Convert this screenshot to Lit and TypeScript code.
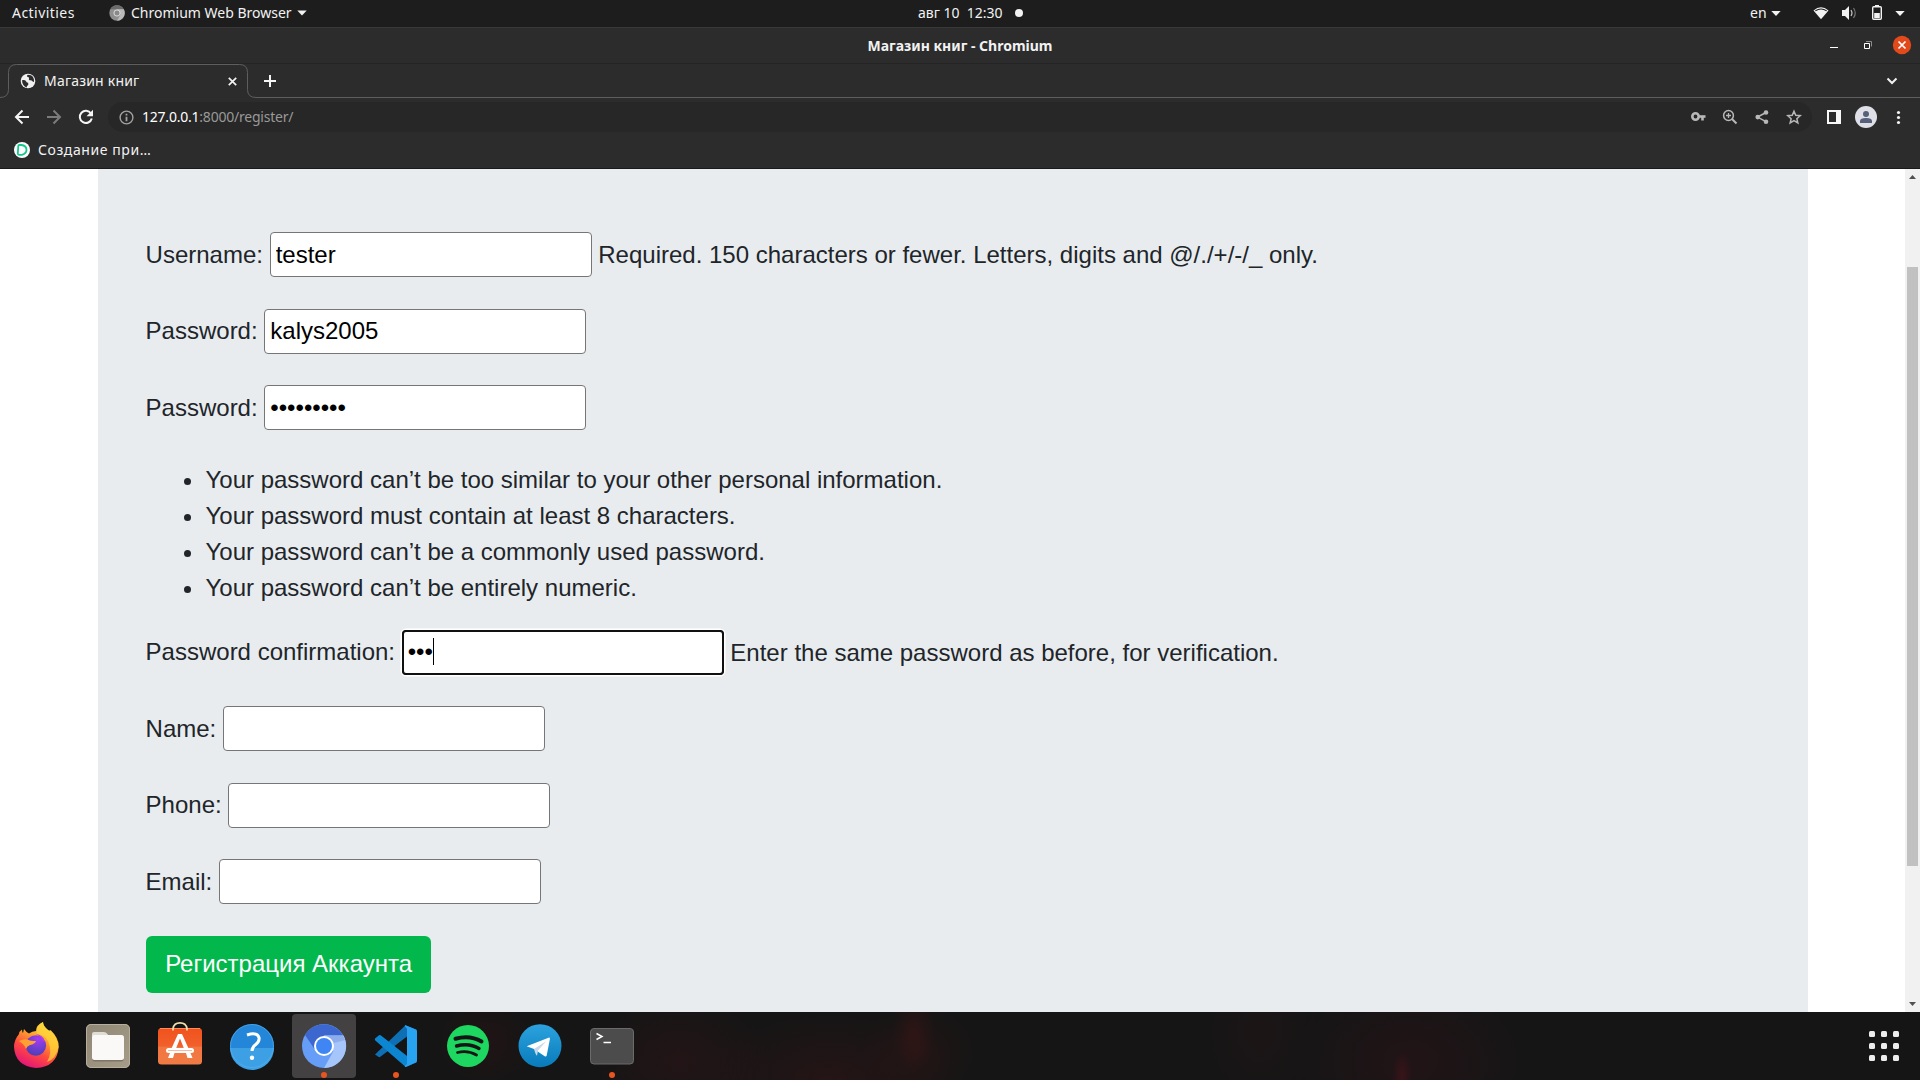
import { LitElement, html, css, svg } from "lit";
import { customElement, property } from "lit/decorators.js";

/* ---------- Top system panel, window title, tabs, toolbar ---------- */
@customElement("browser-chrome")
class BrowserChrome extends LitElement {
  static styles = css`
    :host { display: block; height: 169px; background: #2c2c2c; color: #f2f2f2;
      font-family: "Noto Sans", "DejaVu Sans", sans-serif; font-size: 14px; line-height: 20px; white-space: nowrap; }
    svg { display: block; flex: none; }
    .panel { height: 27px; background: #1d1d1d; border-bottom: 1px solid #393939; display: grid;
      grid-template-columns: 1fr auto 1fr; box-sizing: content-box; }
    .left, .right, .clock { display: flex; align-items: center; }
    .left { padding-left: 12px; }
    .act { width: 97px; letter-spacing: 0.45px; }
    .app { margin-left: 6px; width: 166px; }
    .clock { width: 84px; gap: 11px; }
    .clock .date { flex: none; width: 86px; white-space: pre; }
    .dot { flex: none; width: 8px; height: 8px; border-radius: 50%; background: #f2f2f2; }
    .clock, .left, .right { box-sizing: border-box; padding-bottom: 1px; }
    .right { justify-content: flex-end; }
    .right svg { margin-bottom: -1px; }
    .lang { width: 21px; }
    .title { height: 35px; border-bottom: 1px solid #242424; display: grid; grid-template-columns: 1fr auto 1fr; align-items: center; }
    .title b { grid-column: 2; font-weight: 700; font-size: 14px; }
    .title svg { justify-self: end; }
    .tabs { height: 34px; display: flex; }
    .tab { flex: none; width: 256px; height: 34px; display: grid; }
    .tab > * { grid-area: 1 / 1; }
    .tabin { display: flex; align-items: center; padding: 0 19.500px 0 20px; }
    .tabin .name { flex: 1; margin-left: 8px; letter-spacing: 0.2px; }
    .rest { flex: 1; border-bottom: 1px solid #5e5e5e; display: flex; align-items: center; justify-content: space-between; padding: 0 20px 0 8px; }
    .bar { height: 38px; display: flex; align-items: center; }
    .nav { width: 108px; }
    .pill { width: 1704px; height: 30px; border-radius: 15px; background: #272727; display: flex; align-items: center; }
    .pill .info { margin-left: 10.5px; }
    .url { flex: 1; margin-left: 8.5px; color: #999; letter-spacing: -0.22px; }
    .url b { font-weight: 400; color: #fff; }
    .marks { height: 28px; padding: 0 0 4px 14px; display: flex; align-items: center; gap: 8px; border-bottom: 1px solid #1a1a1a; }
    .marks span { letter-spacing: 0.58px; }
  `;
  render() {
    return html`
      <div class="panel">
        <div class="left">
          <span class="act">Activities</span>
          <svg width="16" height="16" viewBox="0 0 16 16"><circle cx="8" cy="8" r="7.7" fill="#8f8f8f"/><path d="M1.3 4.2A7.7 7.7 0 0 1 14.8 4.3H8z" fill="#6c6c6c"/><path d="M14.8 4.3A7.7 7.7 0 0 1 8 15.7L11.4 9.8 8 4.3z" fill="#b9b9b9"/><circle cx="8" cy="8" r="3.1" fill="#8a8a8a" stroke="#dcdcdc"/></svg>
          <span class="app">Chromium Web Browser</span>
          <svg width="10" height="6" viewBox="0 0 10 6"><path d="M.3.5h9.4L5 5.5z" fill="#f2f2f2"/></svg>
        </div>
        <div class="clock"><span class="date">авг 10  12:30</span><span class="dot"></span></div>
        <div class="right">
          <span class="lang">en</span>
          <svg width="149" height="27" viewBox="0 0 149 27" fill="#f2f2f2">
            <path d="M.3 11h9.4L5 16z"/>
            <path d="M42.500 10.500Q50 4 57.500 10.500L50 19.300z"/><path d="M44.300 10.900Q50 7 55.700 10.900" fill="none" stroke="#1d1d1d" stroke-width="1.100"/>
            <path d="M71 10h3l4-4v14l-4-4h-3z"/><path d="M80 10q2 3 0 6" fill="none" stroke="#c0c0c0" stroke-width="1.200"/><path d="M82.500 8q3.500 5 0 10" fill="none" stroke="#777" stroke-width="1.200"/>
            <path d="M104 5h4v2h-4z"/><rect x="101.700" y="6.700" width="8.600" height="12.600" rx="1" fill="none" stroke="#f2f2f2" stroke-width="1.400"/><path d="M103.200 13h5.600v5h-5.600z"/>
            <path d="M124.300 11h9.400L129 16z"/>
          </svg>
        </div>
      </div>
      <div class="title">
        <b>Магазин книг - Chromium</b>
        <svg width="100" height="35" viewBox="1820 28 100 35" fill="none">
          <path d="M1830 47.500h8" stroke="#fff"/>
          <path d="M1864.500 43.500h5v5h-5z" stroke="#fff"/><path d="M1866 41.500h5.500v5" stroke="#8c8c8c"/>
          <circle cx="1902" cy="45" r="9.200" fill="#e2491b"/><path d="M1898.500 41.500l7 7m0-7l-7 7" stroke="#fff" stroke-width="1.700"/>
        </svg>
      </div>
      <div class="tabs">
        <div class="tab">
          <svg width="256" height="34" viewBox="0 0 256 34" fill="none"><path d="M0 33.500Q8.500 33.500 8.500 25.500V8.500Q8.500.5 16.500.5H239.500Q247.500.5 247.500 8.500V25.500Q247.500 33.500 256 33.500" stroke="#5e5e5e"/></svg>
          <div class="tabin">
            <svg width="16" height="16" viewBox="0 0 16 16"><circle cx="8" cy="8" r="7.300" fill="#f1f1f1"/><path d="M2 7.200q3.200-.6 4.200 1.300.4 1.200 2 1.300v2.300q-1.700 1-1.500 2.300Q2.300 13 2 7.200zM7.800 1.700q-1.800 1.700 0 2.200 1.800.3 1.200 1.700-.6 1 .6 1.700 2.200-.2 2.900.9.800 1.400 1.500.4Q14.300 4 10.900 2.300z" fill="#2c2c2c"/></svg>
            <span class="name">Магазин книг</span>
            <svg width="9" height="9" viewBox="0 0 9 9"><path d="M.8.8l7.400 7.400m0-7.400L.8 8.200" stroke="#f2f2f2" stroke-width="1.700"/></svg>
          </div>
        </div>
        <div class="rest">
          <svg width="12" height="12" viewBox="0 0 12 12"><path d="M6 0v12M0 6h12" stroke="#f5f5f5" stroke-width="2"/></svg>
          <svg width="16" height="10" viewBox="0 0 16 10"><path d="M3.500 2.500L8 7l4.500-4.500" stroke="#f0f0f0" stroke-width="2" fill="none"/></svg>
        </div>
      </div>
      <div class="bar">
        <svg class="nav" width="108" height="38" viewBox="0 98 108 38" fill="none" stroke-width="2">
          <path d="M29 117H16.500M22.500 110.500L16 117l6.500 6.500" stroke="#f5f5f5"/>
          <path d="M47 117h12.500M53.500 110.500L60 117l-6.500 6.500" stroke="#7c7c7c"/>
          <path d="M91 113.500a6.100 6.100 0 1 0 .8 5" stroke="#f5f5f5"/><path d="M93 109.800v6.500h-6.500z" fill="#f5f5f5"/>
        </svg>
        <div class="pill">
          <svg class="info" width="15" height="15" viewBox="0 0 15 15" fill="none" stroke="#a2a2a2"><circle cx="7.500" cy="7.500" r="6.400" stroke-width="1.400"/><path d="M7.500 6.700v4.500M7.500 3.800v1.700" stroke-width="1.800"/></svg>
          <span class="url"><b>127.0.0.1</b>:8000/register/</span>
          <svg width="124" height="30" viewBox="1688 102 124 30" fill="none" stroke="#b8b8b8" stroke-width="1.500">
            <circle cx="1695.500" cy="116.500" r="3.200" stroke-width="2.600"/><path d="M1699 116.500h6.500" stroke-width="2.600"/><path d="M1702.500 117v3.500" stroke-width="2.600"/>
            <circle cx="1728.500" cy="115.500" r="4.900"/><path d="M1732 119l4.500 4.500" stroke-width="1.900"/><path d="M1728.500 113v5M1726 115.500h5" stroke-width="1.300"/>
            <path d="M1766 112.500l-8.500 4.600 8.500 4.600"/><g fill="#b8b8b8" stroke="none"><circle cx="1766" cy="112.500" r="2.300"/><circle cx="1757.700" cy="117.100" r="2.300"/><circle cx="1766" cy="121.700" r="2.300"/></g>
            <path d="M1794 111.200l1.750 4.100 4.450.4-3.350 2.950 1 4.350-3.850-2.300-3.850 2.300 1-4.350-3.350-2.950 4.450-.4z"/>
          </svg>
        </div>
        <svg width="108" height="38" viewBox="1812 98 108 38">
          <rect x="1828" y="111" width="12" height="12" fill="none" stroke="#f8f8f8" stroke-width="2"/><path d="M1836 110h5v14h-5z" fill="#f8f8f8"/>
          <circle cx="1866" cy="117" r="11" fill="#dfdfe7"/><circle cx="1866" cy="114" r="3" fill="#56607b"/><path d="M1860 123v-2q0-3 6-3t6 3v2z" fill="#56607b"/>
          <g fill="#f5f5f5"><circle cx="1898.500" cy="112.500" r="1.600"/><circle cx="1898.500" cy="117.500" r="1.600"/><circle cx="1898.500" cy="122.500" r="1.600"/></g>
        </svg>
      </div>
      <div class="marks">
        <svg width="16" height="16" viewBox="0 0 16 16"><circle cx="8" cy="8" r="8" fill="#fff"/><path d="M4.300 3.700q0-.7.8-.7h2.200q5.200.6 5.200 4.800 0 3.800-4.500 5H5q-1.200 0-1.200-1.200z" fill="none" stroke="#12c98b" stroke-width="1.800"/></svg>
        <span>Создание при…</span>
      </div>`;
  }
}

/* ---------- A labelled form field ---------- */
@customElement("form-row")
class FormRow extends LitElement {
  @property() label = "";
  @property() value = "";
  @property() type = "text";
  @property() help = "";
  @property({ type: Boolean }) active = false;
  static styles = css`
    :host { display: flex; align-items: center; height: 45px; gap: 6.67px; white-space: nowrap; }
    .box { position: relative; display: flex; }
    input { box-sizing: border-box; width: 322px; height: 45px; margin: 0; border: 1px solid #767676; border-radius: 4px;
      padding: 1px 5px; background: #fff; color: #000; font: inherit; outline: none; }
    input.active { border-color: #101010; outline: 2px solid #101010; outline-offset: -2px; box-shadow: 0 0 0 1.500px #fff; }
    .caret { position: absolute; left: 31px; top: 8px; width: 1px; height: 27px; background: #000; }
    .low { padding-top: 2px; }
  `;
  render() {
    return html`<span>${this.label}</span><span class="box"><input class=${this.active ? "active" : ""} type=${this.type} .value=${this.value} readonly />${this.active ? html`<span class="caret"></span>` : ""}</span>${this.help ? html`<span class=${this.active ? "low" : ""}>${this.help}</span>` : ""}`;
  }
}

/* ---------- Dock ---------- */
const icons = [
  svg`<defs><linearGradient id="f1" x1=".8" y1="0" x2=".3" y2="1"><stop offset="0" stop-color="#fff44f"/><stop offset=".35" stop-color="#ffa62c"/><stop offset=".65" stop-color="#ff4a3f"/><stop offset="1" stop-color="#e3127c"/></linearGradient><radialGradient id="f2" cx=".6" cy=".2" r=".8"><stop offset="0" stop-color="#a53cf0"/><stop offset="1" stop-color="#4a3fb8"/></radialGradient></defs>
    <path d="M24 17Q26 20 29 21.500Q32 19 36 19Q36 13 43 10Q43 14 48 18Q50 19 50.500 18Q59 26 58.700 35Q57 55 36 56Q15 54 14 35Q14 28 19 22Q19 19.500 22 17.500Q22 20 23 21Z" fill="url(#f1)"/>
    <path d="M43 10Q43 14 48 18Q58 25 58.500 35Q56 47 47 50Q53 40 48 29Q45 23 37 22Q36 14 43 10Z" fill="#ffd43a" opacity=".75"/>
    <circle cx="35.800" cy="33.500" r="10.300" fill="url(#f2)"/><path d="M19 29q6-3 10-1 1 1 7 1-1 3-6 4-3 1-4 4-2-5-7-8z" fill="#ffa033"/><path d="M36 22q8 1 9 9l-3-3q-2-4-6-6z" fill="#b13cf0"/>`,
  svg`<defs><linearGradient id="fg" x2="1" y2="1"><stop offset="0" stop-color="#8f8675"/><stop offset="1" stop-color="#a69c89"/></linearGradient></defs>
    <rect x="14" y="12" width="44" height="44" rx="5" fill="url(#fg)"/><rect x="14.500" y="12.500" width="43" height="43" rx="4.500" fill="none" stroke="#b7ae9c"/>
    <path d="M20 26v-4q0-2 2-2h10q2 0 3 1.500l1.500 2H40z" fill="#e0ddd5"/><rect x="20" y="24" width="32" height="25.500" rx="3" fill="#7c7464"/><rect x="20" y="23" width="32" height="25" rx="2.500" fill="#faf9f7"/>`,
  svg`<defs><linearGradient id="sg" x2="0" y2="1"><stop offset="0" stop-color="#f1521c"/><stop offset=".5" stop-color="#f1602c"/><stop offset=".52" stop-color="#f27640"/><stop offset="1" stop-color="#f17b45"/></linearGradient></defs>
    <rect x="14" y="16" width="44" height="36.500" rx="3.500" fill="url(#sg)"/><path d="M16 16.500h40" stroke="#ff8b5c"/>
    <path d="M29 18.500v-2q1-5.700 7-5.700t7 5.700v2" fill="none" stroke="#f1dcae" stroke-width="1.700"/>
    <path d="M34 22h4l6.300 14h-4.500L36 26.500 32.200 36h-4.500z" fill="#fff"/><path d="M26 41h4.500L29 46h-5zM42 41h4.500l2 5h-5z" fill="#fff"/>
    <rect x="22" y="36" width="28" height="5" rx="2.500" fill="#fff"/><path d="M24 38.500h24" stroke="#f9b8a0"/>`,
  svg`<circle cx="36" cy="34" r="22" fill="#2386d8"/><path d="M14 36h44a22 22 0 0 1-44 0z" fill="#3da0e4"/><circle cx="36" cy="34" r="21.500" fill="none" stroke="#5ab4ee" stroke-opacity=".6"/>
    <path d="M31 23q10-3.300 12 2.500.8 4-3.500 7.200-3.500 2.600-3.500 6.300" fill="none" stroke="#fff" stroke-width="3"/><circle cx="36" cy="45.800" r="2.200" fill="#fff"/>`,
  svg`<circle cx="36" cy="34" r="22" fill="#669df6"/><path d="M17 23A22 22 0 0 1 55 23.500H36L26.500 37Z" fill="#3b67cf"/><path d="M36 23.500H55.500A22 22 0 0 1 36 56L45.500 39Z" fill="#a5c5fb"/><path d="M36 24h19l2 4-11 3z" fill="#7d9fe0" opacity=".6"/>
    <circle cx="36" cy="34" r="10" fill="#fff"/><circle cx="36" cy="34" r="8" fill="#3f86f4"/>`,
  svg`<path d="M15 42.500L45.500 13.300 57 18 47 24.500 20 45Q19 45.500 18 44.500z" fill="#0e6fb5"/><path d="M15 26.500l4-3.300q1-.6 2 .2L47 44l10 6-11.300 5L15.300 28.500Q14.500 27.500 15 26.500z" fill="#0d86d2"/><path d="M45.500 13.200L56 17.500q1 .5 1 2v29q0 1.500-1 2L45.800 55q-1.500.2-.8-1.200l2-1.800V16.500L45 14.500Q44.500 13 45.500 13.200z" fill="#27a3f2"/>`,
  svg`<circle cx="36" cy="34" r="21" fill="#1ed760"/><g fill="none" stroke="#151515" stroke-linecap="round"><path d="M23.500 26.700Q38 22.700 49.500 29.500" stroke-width="4"/><path d="M24.500 34Q37 30.500 47 36.500" stroke-width="3.400"/><path d="M25.500 40.500Q36 38 44.500 43" stroke-width="2.800"/></g>`,
  svg`<defs><linearGradient id="tg" x2="0" y2="1"><stop offset="0" stop-color="#2ca2df"/><stop offset="1" stop-color="#087cba"/></linearGradient></defs><circle cx="36" cy="33.700" r="21.500" fill="url(#tg)"/>
    <path d="M22.700 34.300L44.500 25.700q1.600-.4 1.400 1.300L42.700 43.500q-.5 1.700-2 .8L30 37z" fill="#fff"/><path d="M30 37L42.500 29 34 38.500 33 43.700Q32 43 31.300 41z" fill="#c8daea"/>`,
  svg`<rect x="14.500" y="16.500" width="43" height="35.500" rx="3.500" fill="#4c4c4c" stroke="#6b6b6b"/><path d="M20.500 21.500l5.500 3-5.500 3" fill="none" stroke="#fff" stroke-width="1.500"/><path d="M27.500 30.500h7.500" stroke="#fff" stroke-width="1.500"/>`,
];

@customElement("app-dock")
class AppDock extends LitElement {
  static styles = css`
    :host { display: flex; justify-content: space-between; height: 68px; background:
      radial-gradient(ellipse 10px 24px at 1402px 64px, rgba(170,20,35,.18), transparent),
      radial-gradient(ellipse 120px 90px at 1410px 50px, rgba(90,15,30,.18), transparent),
      radial-gradient(ellipse 60px 80px at 1260px 20px, rgba(80,20,30,.12), transparent),
      radial-gradient(ellipse 22px 40px at 914px 20px, rgba(130,20,20,.18), transparent),
      radial-gradient(ellipse 60px 50px at 920px 40px, rgba(100,20,20,.14), transparent),
      radial-gradient(ellipse 130px 70px at 830px 68px, rgba(100,18,26,.2), transparent),
      radial-gradient(ellipse 90px 70px at 680px 50px, rgba(90,18,26,.2), transparent),
      radial-gradient(ellipse 50px 45px at 485px 30px, rgba(80,15,20,.2), transparent), #151515; }
    .apps { display: flex; }
    .slot { width: 72px; height: 68px; display: grid; justify-items: center; }
    .slot > * { grid-area: 1 / 1; }
    .hl { width: 64px; height: 64px; align-self: center; border-radius: 4px; background: #434141; }
    .run { align-self: end; width: 6px; height: 6px; border-radius: 50%; background: #e95420; margin-bottom: 2px; }
    svg { display: block; }
    .grid { display: grid; grid-template-columns: repeat(3, 6px); grid-auto-rows: 6px; gap: 6px; padding: 19px 21px 0 0; }
    .grid i { background: #ececec; border-radius: 1.5px; }
  `;
  render() {
    return html`<div class="apps">${icons.map((ic, i) => html`<div class="slot">
        ${i === 4 ? html`<span class="hl"></span>` : ""}
        <svg width="72" height="68" viewBox="0 0 72 68">${ic}</svg>
        ${[4, 5, 8].includes(i) ? html`<span class="run"></span>` : ""}
      </div>`)}</div>
      <div class="grid">${Array.from({ length: 9 }, () => html`<i></i>`)}</div>`;
  }
}

@customElement("app-root")
class AppRoot extends LitElement {
  static styles = css`
    :host { display: flex; flex-direction: column; width: 1920px; height: 1080px; overflow: hidden; background: #fff; }
    .view { height: 843px; display: flex; justify-content: space-between; padding-left: 98px; }
    .card { width: 1710px; box-sizing: border-box; padding: 63px 47.600px 0; background: #e8ecef; color: #212529; overflow: hidden;
      font: 24px/36px "Liberation Sans", Arial, sans-serif; display: flex; flex-direction: column; align-items: flex-start; }
    form-row { margin-bottom: 31.500px; }
    .rules { margin: 0 0 24px; padding-left: 59.900px; height: 144px; }
    button { width: 285px; height: 57px; border: 0; border-radius: 6px; padding: 0 0 0 1px; background: #02b84c; color: #fff; font: inherit; flex: none; }
    .scroll { width: 15px; background: #f1f1f1; display: flex; flex-direction: column; align-items: center; }
    .track { flex: 1; width: 11px; padding-top: 83px; }
    .thumb { width: 11px; height: 599px; background: #c1c1c1; }
    .arrow { height: 15px; display: block; }
  `;
  render() {
    return html`
      <browser-chrome></browser-chrome>
      <div class="view">
        <main class="card">
          <form-row label="Username:" value="tester" help="Required. 150 characters or fewer. Letters, digits and @/./+/-/_ only."></form-row>
          <form-row label="Password:" value="kalys2005"></form-row>
          <form-row label="Password:" value="kalys2005" type="password"></form-row>
          <ul class="rules">
            <li>Your password can’t be too similar to your other personal information.</li>
            <li>Your password must contain at least 8 characters.</li>
            <li>Your password can’t be a commonly used password.</li>
            <li>Your password can’t be entirely numeric.</li>
          </ul>
          <form-row label="Password confirmation:" value="kal" type="password" help="Enter the same password as before, for verification." active></form-row>
          <form-row label="Name:"></form-row>
          <form-row label="Phone:"></form-row>
          <form-row label="Email:"></form-row>
          <button>Регистрация Аккаунта</button>
        </main>
        <div class="scroll">
          <svg class="arrow" width="15" height="15"><path d="M4 10h7L7.500 6z" fill="#505050"/></svg>
          <div class="track"><div class="thumb"></div></div>
          <svg class="arrow" width="15" height="15"><path d="M4 5h7L7.500 9z" fill="#505050"/></svg>
        </div>
      </div>
      <app-dock></app-dock>`;
  }
}
